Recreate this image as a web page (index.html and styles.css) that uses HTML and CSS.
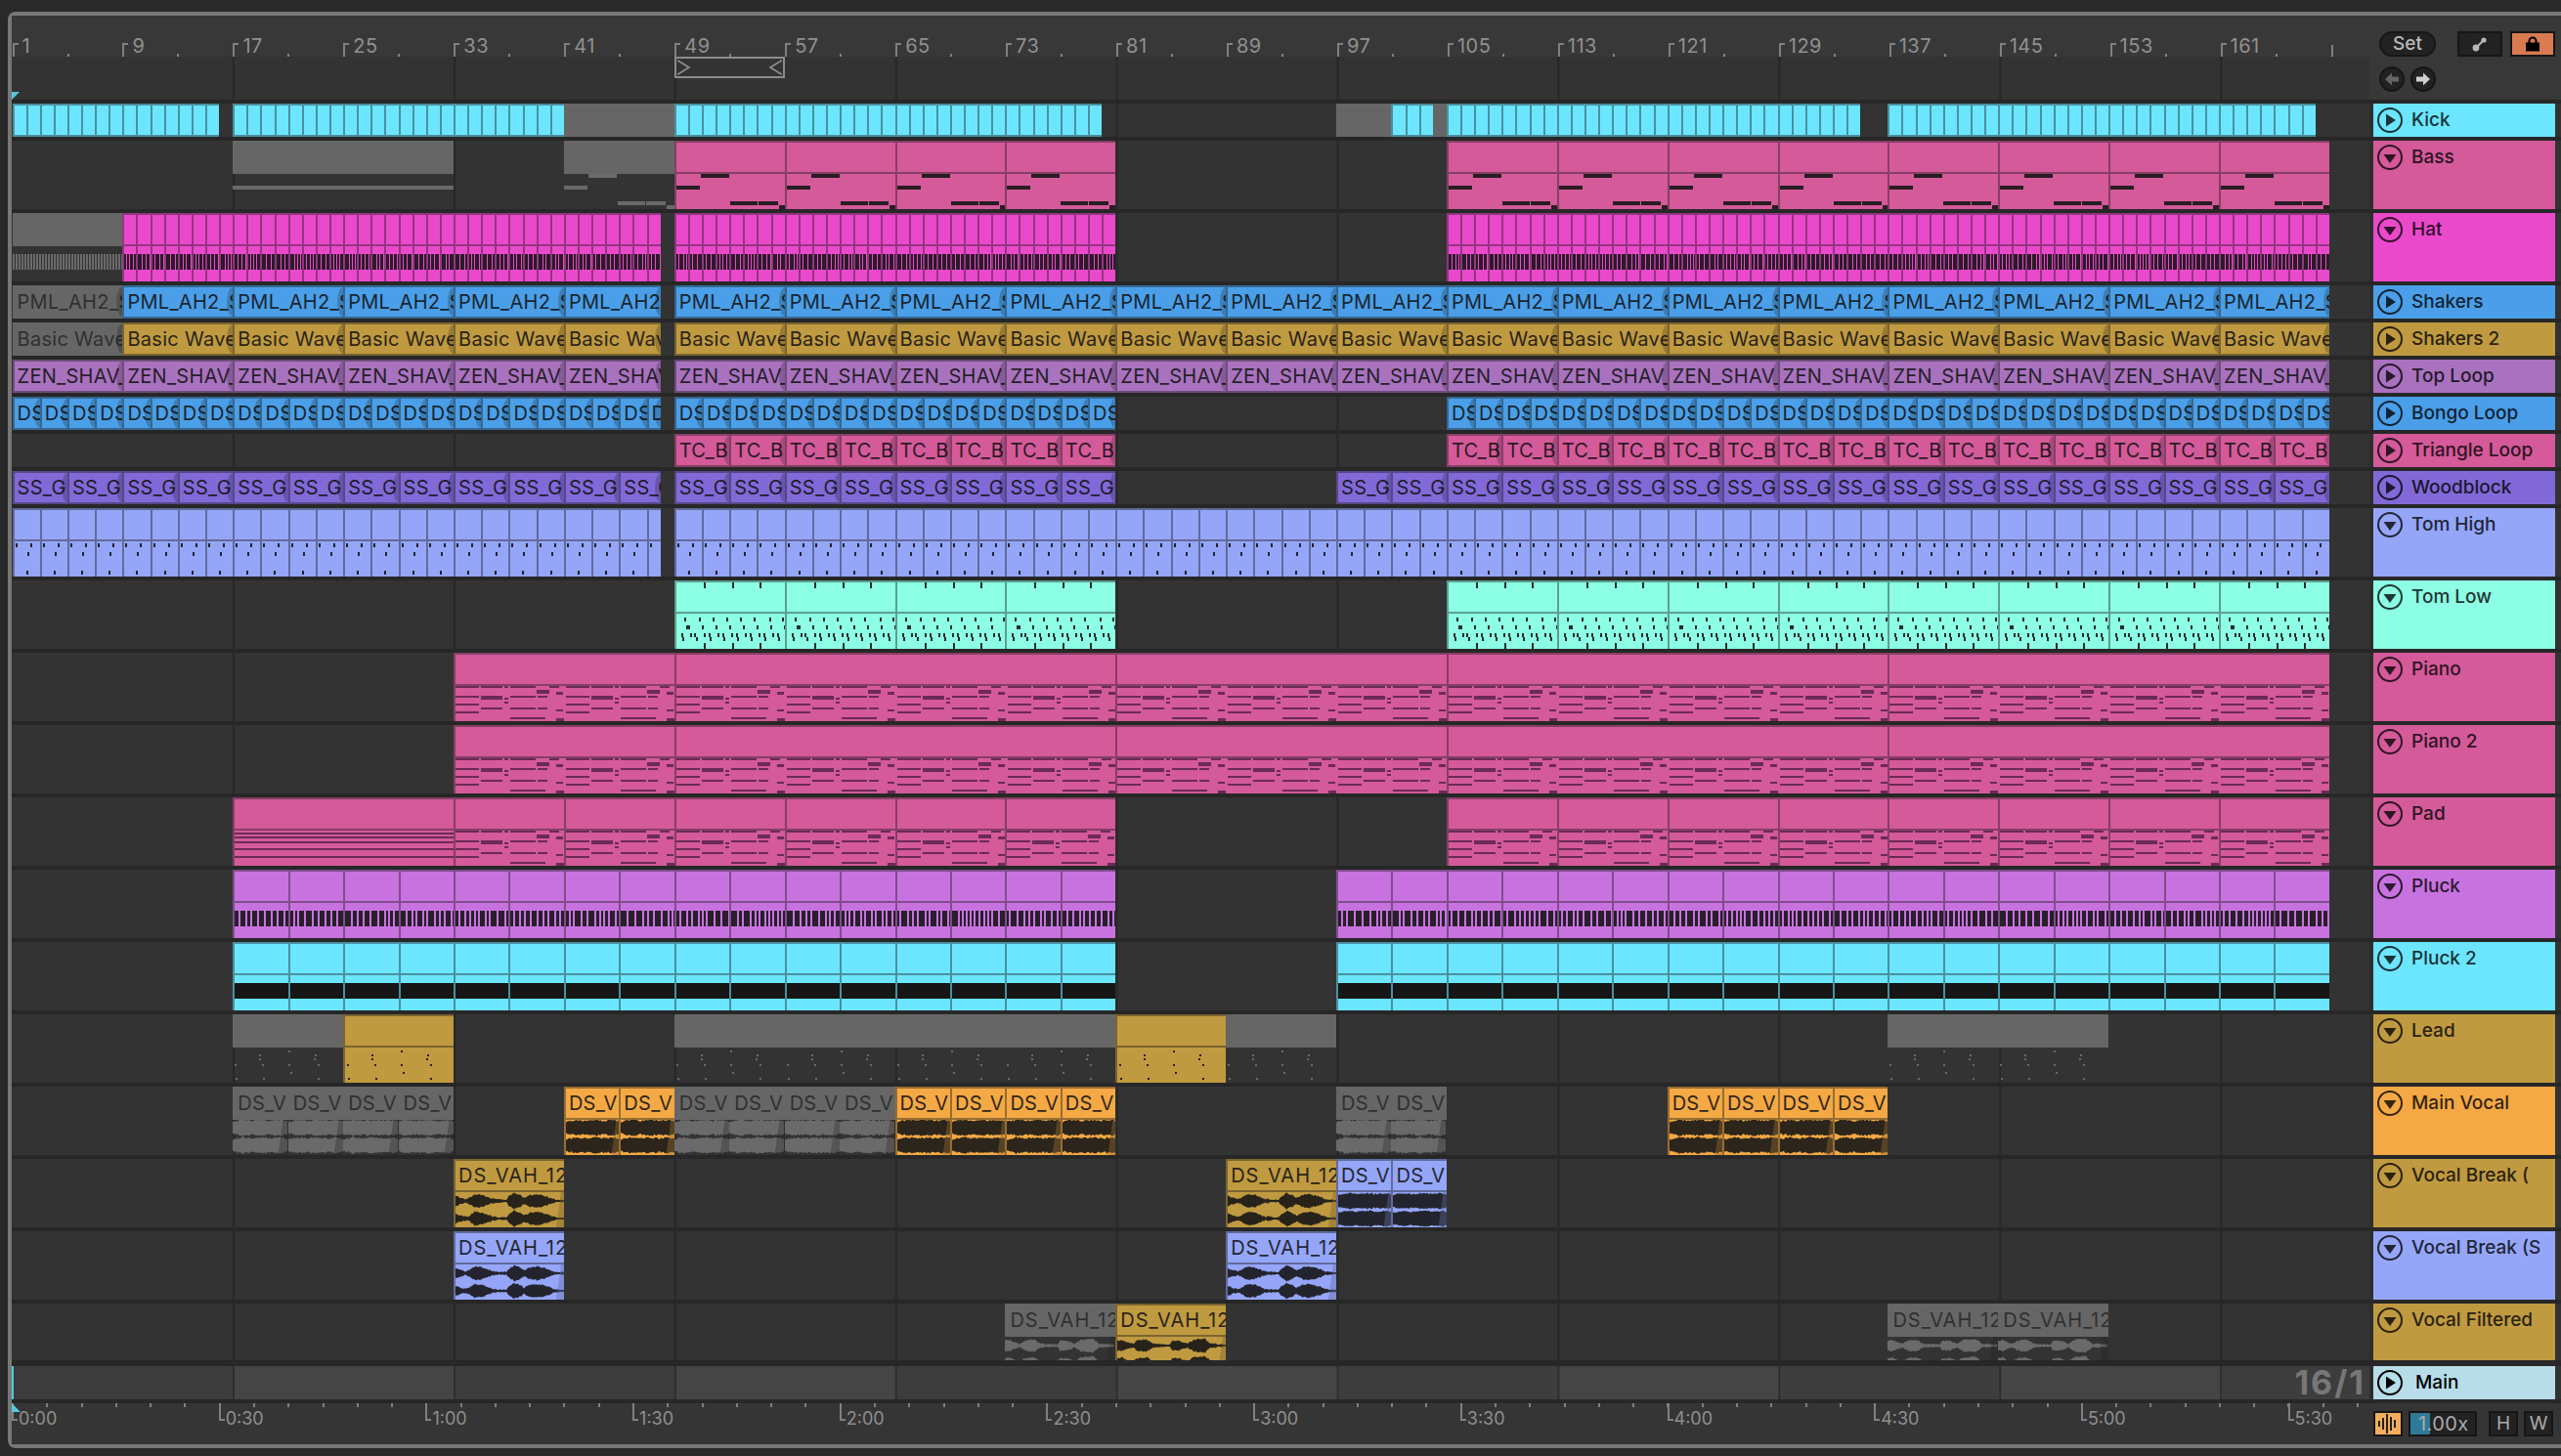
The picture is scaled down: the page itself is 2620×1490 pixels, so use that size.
FILE: index.html
```html
<!DOCTYPE html>
<html lang="en">
<head>
    <meta charset="UTF-8">
    <title>Arrangement View</title>
    <link rel="stylesheet" href="styles.css">
</head>
<body>
    <main class="frame">
        <header class="overview">
            <div class="overview-left">
                <div class="bar-ruler" id="barRuler"></div>
                <div class="loop-strip lane-grid">
                    <div class="loop-brace">
                        <svg class="loop-end" viewBox="0 0 16 20"><path d="M1 2 L14 10 L1 18"/></svg>
                        <svg class="loop-end" viewBox="0 0 16 20"><path d="M15 2 L2 10 L15 18"/></svg>
                    </div>
                    <span class="insert-mark"></span>
                </div>
            </div>
            <div class="set-controls">
                <div class="control-row">
                    <button class="set-btn">Set</button>
                    <button class="square-btn">
                        <svg width="16" height="16" viewBox="0 0 16 16"><circle cx="4" cy="12" r="3.4"/><circle cx="12" cy="4" r="2.6"/><path class="link-bar" d="M4 12 L12 4"/></svg>
                    </button>
                    <button class="square-btn lock-btn">
                        <svg width="16" height="16" viewBox="0 0 16 16"><path class="shackle" d="M4.5 7 V5 a3.5 3.5 0 0 1 7 0 V7"/><rect x="1" y="6.5" width="14" height="9"/></svg>
                    </button>
                </div>
                <div class="control-row arrows">
                    <button class="round-btn dim">
                        <svg width="16" height="16" viewBox="0 0 16 16"><path d="M1 8 L8 1.5 V5.5 H15 V10.5 H8 V14.5 Z"/></svg>
                    </button>
                    <button class="round-btn">
                        <svg width="16" height="16" viewBox="0 0 16 16"><path d="M15 8 L8 1.5 V5.5 H1 V10.5 H8 V14.5 Z"/></svg>
                    </button>
                </div>
            </div>
        </header>

        <div class="tracks" id="tracks"></div>

        <div class="track main-row">
            <div class="main-lane">
                <span class="play-line"></span>
                <span class="grid-label">16/1</span>
            </div>
            <div class="track-head main-head c-main">
                <svg class="fold" viewBox="0 0 26 26"><circle cx="13" cy="13" r="12"/><path class="fold-mark" d="M9 6.5 L19 13 L9 19.5 Z"/></svg>
                <span class="track-name">Main</span>
            </div>
        </div>

        <footer class="time-row">
            <div class="time-ruler" id="timeRuler"><span class="time-start"></span></div>
            <div class="time-controls">
                <button class="wave-btn">
                    <svg width="22" height="22" viewBox="0 0 22 22"><path d="M2 8 V14 M6 5 V17 M10 1 V21 M14 4 V18 M18 7 V15"/></svg>
                </button>
                <div class="speed">1.00x</div>
                <button class="key-btn">H</button>
                <button class="key-btn">W</button>
            </div>
        </footer>
    </main>

    <script src="script.js"></script>
</body>
</html>
```

FILE: styles.css
```css
* {
    margin: 0;
    padding: 0;
    box-sizing: border-box;
    font-family: Inter, 'Noto Sans', sans-serif;
}

body {
    width: 2620px;
    height: 1490px;
    background-color: #292929;
    overflow: hidden;
}

button {
    border: none;
    cursor: default;
}

.frame {
    display: flex;
    flex-direction: column;
    width: 2612px;
    height: 1470px;
    margin: 12px 0 0 8px;
    border: 4px solid #777;
    border-right: none;
    border-radius: 8px 0 0 8px;
    background-color: #272727;
}

/* Colours */
.c-cyan { --c: #6ce6ff; }
.c-pink { --c: #d45a9a; }
.c-hat { --c: #eb49cc; }
.c-blue { --c: #4a9fe8; }
.c-amber { --c: #c09a40; }
.c-lilac { --c: #a972bf; }
.c-violet { --c: #8269d8; }
.c-peri { --c: #95a6f9; }
.c-mint { --c: #8cffe4; }
.c-pluck { --c: #c872e0; }
.c-orange { --c: #f4a944; }
.c-main { --c: #b6dde8; }

/* Top strip */
.overview {
    display: flex;
    height: 86px;
    background-color: #383838;
}

.overview-left {
    display: flex;
    flex-direction: column;
    width: 2412px;
}

.bar-ruler {
    display: flex;
    height: 42px;
    padding-left: 0.5px;
    background-color: #383838;
}

.bar-mark {
    position: relative;
    flex: 0 0 112.96px;
    padding: 21px 0 0 10px;
    font-size: 20px;
    letter-spacing: 0.5px;
    line-height: 20px;
    color: #909090;
}

.bar-mark:before {
    content: '';
    position: absolute;
    left: 0;
    bottom: 0;
    width: 4px;
    height: 12px;
    border-left: 2px solid #808080;
    border-top: 2px solid #808080;
}

.bar-mark:after {
    content: '';
    position: absolute;
    left: 56px;
    bottom: 0;
    width: 2px;
    height: 3px;
    background-color: #808080;
}

.bar-mark.last:before {
    border-top: none;
}

.bar-mark.last:after {
    display: none;
}

.lane-grid {
    background:
        linear-gradient(#333 0 0) no-repeat 0 0 / 14px 100%,
        linear-gradient(90deg, #272727 2px, #333 2px) 226px 0 / 225.92px 100%;
}

.loop-strip {
    position: relative;
    display: grid;
    grid-template-columns: repeat(171, 14.12px);
    align-items: start;
    flex: 1;
    padding-left: 0.5px;
}

.loop-brace {
    grid-column: 49 / 57;
    display: flex;
    justify-content: space-between;
    height: 22px;
    border: 2px solid #8c8c8c;
}

.loop-end {
    width: 15px;
    height: 18px;
    fill: none;
    stroke: #8c8c8c;
    stroke-width: 2;
}

.insert-mark {
    position: absolute;
    left: 0;
    bottom: 0;
    width: 8px;
    height: 8px;
    background-color: #57c8dc;
    clip-path: polygon(0 0, 100% 0, 0 100%);
}

.set-controls {
    flex: 1;
    padding: 16px 0 0 10px;
}

.control-row {
    display: flex;
    gap: 8px;
}

.set-btn {
    width: 58px;
    height: 26px;
    margin-right: 14px;
    border: 2px solid #161616;
    border-radius: 13px;
    background-color: #222;
    color: #b8b8b8;
    font-size: 19px;
    font-weight: 500;
    line-height: 20px;
}

.square-btn {
    display: flex;
    align-items: center;
    justify-content: center;
    width: 46px;
    height: 26px;
    border: 2px solid #161616;
    background-color: #222;
    fill: #b8b8b8;
}

.link-bar {
    stroke: #b8b8b8;
    stroke-width: 2;
}

.lock-btn {
    background-color: #d97a50;
    fill: #000;
}

.shackle {
    fill: none;
    stroke: #000;
    stroke-width: 2;
}

.arrows {
    gap: 6px;
    margin-top: 10px;
}

.round-btn {
    display: flex;
    align-items: center;
    justify-content: center;
    width: 26px;
    height: 26px;
    border: 2px solid #161616;
    border-radius: 50%;
    background-color: #222;
    fill: #d0d0d0;
}

.round-btn.dim {
    fill: #666;
}

/* Track rows */
.tracks {
    display: flex;
    flex-direction: column;
    gap: 4px;
    margin-top: 4px;
}

.track {
    display: flex;
    background-color: #2e2e2e;
    padding-right: 6px;
    box-shadow: inset -6px 0 #333;
}

.h-short { height: 34px; }
.h-tall { height: 70px; }
.h-last { height: 58px; }

.lane {
    display: grid;
    grid-template-columns: repeat(171, 14.12px);
    grid-template-rows: 100%;
    flex: 0 0 2412px;
    padding-left: 0.5px;
    overflow: hidden;
}

.track-head {
    display: flex;
    align-items: flex-start;
    gap: 9px;
    flex: 0 0 186px;
    margin-left: 4px;
    padding: 4px 0 0 4px;
    background-color: var(--c);
    color: color-mix(in srgb, var(--c) 22%, #000);
}

.fold {
    flex: 0 0 26px;
    height: 26px;
    fill: none;
    stroke: currentColor;
    stroke-width: 2;
}

.fold-mark {
    fill: currentColor;
    stroke: none;
}

.track-name {
    font-size: 19px;
    font-weight: 500;
    line-height: 26px;
    white-space: nowrap;
    overflow: hidden;
}

/* Clips */
.clip {
    --edge: color-mix(in srgb, var(--c) 58%, #1a1a1a);
    --ink: color-mix(in srgb, var(--c) 10%, #161616);
    grid-row: 1;
    display: flex;
    flex-direction: column;
    min-width: 0;
    background-color: var(--c);
    border-left: 2px solid var(--edge);
    overflow: hidden;
}

.clip-head {
    position: relative;
    flex: 0 0 34px;
    padding-left: 3px;
    border-top: 2px solid var(--edge);
    border-bottom: 2px solid var(--edge);
    color: color-mix(in srgb, var(--c) 14%, #111);
    font-size: 20px;
    letter-spacing: 0.3px;
    line-height: 30px;
    white-space: nowrap;
    overflow: hidden;
}

.clip-head.long-label {
    letter-spacing: 1px;
}

.clip-head svg {
    position: absolute;
    top: 0;
    left: 0;
}

.clip-head.has-fade:after {
    content: '';
    position: absolute;
    right: 0;
    top: 0;
    bottom: 0;
    width: 6px;
    border-radius: 100% 0 0 100% / 50% 0 0 50%;
    background-color: rgba(0, 0, 0, 0.2);
}

.clip-body {
    display: block;
    flex: 1;
    min-height: 0;
}

.clip-body rect,
.clip-body path,
.clip-head rect {
    fill: var(--ink);
}

.clip-body .fade {
    fill: var(--edge);
    opacity: 0.4;
}

.clip.ink-soft {
    --ink: #6b2a58;
}

.clip.ink-black {
    --ink: #161616;
}

.clip.off {
    --c: #666;
    --edge: #666;
    --ink: #6a6a6a;
    background-color: transparent;
    border-left: none;
}

.clip.off .clip-head {
    background-color: #666;
    color: #303030;
    padding-left: 5px;
}

.clip.off .fade {
    fill: #222;
    opacity: 0.3;
}

/* Main row */
.main-row {
    flex: 0 0 34px;
    margin-top: 6px;
}

.main-lane {
    position: relative;
    flex: 0 0 2412px;
    background:
        linear-gradient(90deg, #2e2e2e 2px, transparent 2px) 226px 0 / 225.92px 100%,
        repeating-linear-gradient(90deg, #3d3d3d 0, #3d3d3d 226px, #454545 226px, #454545 452px);
}

.play-line {
    position: absolute;
    left: 0;
    top: 0;
    width: 2px;
    height: 100%;
    background-color: #57c8dc;
}

.grid-label {
    position: absolute;
    right: 4px;
    top: -3px;
    font-size: 34px;
    font-weight: 700;
    letter-spacing: 2px;
    line-height: 40px;
    color: #777;
}

.main-head {
    gap: 13px;
    color: #000;
}

/* Time ruler */
.time-row {
    display: flex;
    flex: 1;
    margin-top: 4px;
    background-color: #353535;
}

.time-ruler {
    position: relative;
    display: flex;
    flex: 0 0 2412px;
    background: repeating-linear-gradient(90deg, #808080 0, #808080 2px, transparent 2px, transparent 35.28px) 0 0 / 100% 4px no-repeat;
    overflow: hidden;
}

.time-start {
    position: absolute;
    left: 0;
    top: 0;
    width: 9px;
    height: 9px;
    background-color: #57c8dc;
    clip-path: polygon(0 0, 100% 100%, 0 100%);
    z-index: 1;
}

.time-mark {
    position: relative;
    flex: 0 0 211.7px;
    padding: 6px 0 0 7px;
    font-size: 18px;
    line-height: 20px;
    color: #8f8f8f;
}

.time-mark:before {
    content: '';
    position: absolute;
    left: 0;
    top: 0;
    width: 4px;
    height: 16px;
    border-left: 2px solid #808080;
    border-bottom: 2px solid #808080;
}

.time-controls {
    display: flex;
    gap: 6px;
    flex: 1;
    margin-left: 4px;
    padding-top: 8px;
}

.wave-btn {
    display: flex;
    align-items: center;
    justify-content: center;
    width: 30px;
    height: 26px;
    border: 2px solid #161616;
    background-color: #f4ae5b;
    fill: none;
    stroke: #222;
    stroke-width: 2;
}

.speed {
    width: 70px;
    height: 26px;
    padding-left: 8px;
    border: 2px solid #161616;
    background: linear-gradient(90deg, #2f7a96 20px, #222 20px);
    color: #aaa;
    font-size: 20px;
    letter-spacing: 0.4px;
    line-height: 22px;
}

.key-btn {
    width: 30px;
    height: 26px;
    border: 2px solid #161616;
    background-color: #222;
    color: #aaa;
    font-size: 19px;
    line-height: 20px;
}

.speed + .key-btn {
    margin-left: 6px;
}
```

FILE: script.js
```js
const BAR = 14.12;

// Small seeded generator so the note patterns stay the same on every run
let seed = 7;
function rnd() {
    seed = (seed * 16807) % 2147483647;
    return (seed & 1023) / 1023;
}

function rect(x, y, w, h) {
    return '<rect x="' + x + '" y="' + y + '" width="' + w + '" height="' + h + '"/>';
}

// Vertical strips used for the busy one-note-per-step clips
function stripes(width, y, h, minW, maxW, gap) {
    let out = '';
    let x = 0;
    while (x < width) {
        const w = minW + Math.floor(rnd() * (maxW - minW + 1));
        out += rect(x, y, w, h);
        x += w + gap;
    }
    return out;
}

// Repeat a list of [x, y, w, h] every n pixels
function repeat(width, every, notes) {
    let out = '';
    for (let x0 = 0; x0 < width - 1; x0 += every) {
        notes.forEach(function(n) {
            if (x0 + n[0] < width) out += rect(Math.round(x0 + n[0]), n[1], n[2], n[3]);
        });
    }
    return out;
}

const bassNotes = [[25, 0, 29, 4], [0, 12, 24, 4], [55, 28, 28, 4], [84, 28, 20, 4], [105, 32, 8, 4]];
const pianoNotes = [
    [0, 0, 24, 2], [26, 0, 22, 2], [50, 0, 4, 2], [56, 0, 26, 2], [84, -2, 10, 2], [96, 0, 10, 2],
    [83, 4, 13, 4],
    [0, 10, 24, 2], [26, 10, 22, 4], [50, 12, 4, 2], [56, 10, 26, 2], [84, 10, 10, 2], [103, 6, 7, 3],
    [50, 16, 4, 2],
    [0, 18, 24, 2],
    [26, 22, 22, 2], [56, 22, 26, 2], [84, 22, 10, 2], [103, 24, 7, 2],
    [0, 26, 24, 2],
    [56, 32, 36, 2], [103, 33, 8, 3]
];
const tomHighNotes = [[1, 2, 2, 4], [16, 2, 2, 4], [13, 11, 2, 4], [12, 30, 2, 4]];
const tomLowHead = [[28, 0, 2, 6], [57, 0, 2, 6], [85, 0, 2, 6]];
const tomLowNotes = [
    [8, 4, 2, 4], [23, 4, 2, 4], [37, 4, 2, 4], [51, 4, 2, 4], [65, 4, 2, 4], [79, 4, 2, 4], [95, 4, 2, 4], [108, 4, 2, 4],
    [10, 12, 4, 4], [26, 12, 2, 4], [40, 12, 2, 4], [54, 12, 2, 4], [68, 12, 2, 4], [82, 12, 2, 4], [96, 12, 2, 4], [110, 12, 2, 4],
    [5, 20, 2, 4], [14, 20, 2, 4], [18, 20, 2, 4], [28, 20, 2, 4], [33, 20, 2, 4], [42, 20, 2, 4], [47, 20, 2, 4],
    [56, 20, 2, 4], [61, 20, 2, 4], [70, 20, 2, 4], [75, 20, 2, 4], [84, 20, 2, 4], [89, 20, 2, 4], [98, 20, 2, 4], [103, 20, 2, 4],
    [6, 24, 2, 4], [20, 24, 2, 4], [34, 24, 2, 4], [48, 24, 2, 4], [62, 24, 2, 4], [76, 24, 2, 4], [90, 24, 2, 4], [104, 24, 2, 4],
    [28, 30, 2, 6], [57, 30, 2, 6], [85, 30, 2, 6]
];
const leadNotes = [
    [27, 7, 2, 2], [27, 11, 2, 2], [57, 3, 2, 2], [84, 7, 2, 2], [83, 11, 2, 2], [2, 17, 2, 2],
    [30, 17, 2, 2], [57, 17, 2, 2], [87, 17, 2, 2], [59, 25, 2, 2], [3, 31, 2, 2], [31, 31, 2, 2], [87, 31, 2, 2]
];

// Amplitude over x for the audio clips, as [x, amplitude] points
const envPhrase = [[0, 5], [6, 3], [10, 2], [14, 3], [20, 7], [28, 6], [38, 2], [52, 1], [54, 4], [60, 8], [66, 6], [70, 3], [76, 6], [84, 7], [92, 5], [100, 2], [104, 1], [114, 1]];
const envFiltered = [[0, 5], [5, 6], [10, 3], [16, 2], [20, 5], [30, 6], [36, 2], [54, 1], [56, 5], [64, 5], [72, 2], [78, 6], [90, 7], [96, 2], [114, 1]];
const envFull = [[0, 6], [10, 8], [20, 7], [30, 8], [40, 7], [50, 8], [57, 6]];

function envAt(env, x) {
    for (let i = 1; i < env.length; i++) {
        if (x <= env[i][0]) {
            const t = (x - env[i - 1][0]) / (env[i][0] - env[i - 1][0]);
            return env[i - 1][1] + (env[i][1] - env[i - 1][1]) * t;
        }
    }
    return env[env.length - 1][1];
}

function wave(width, env, centers, jitter) {
    let out = '';
    centers.forEach(function(cy) {
        let top = '';
        let bottom = '';
        for (let x = 0; x <= width; x += 1) {
            const a = Math.max(envAt(env, x) + rnd() * jitter - jitter / 2, 1);
            top += (x ? 'L' : 'M') + x + ' ' + (cy - a).toFixed(1);
            bottom = 'L' + x + ' ' + (cy + a).toFixed(1) + bottom;
        }
        out += '<path d="' + top + bottom + 'Z"/>';
    });
    out += '<polygon class="fade" points="' + width + ',0 ' + (width - 5) + ',0 ' + (width - 10) + ',36 ' + width + ',36"/>';
    return out;
}

// Body drawings, one per kind of clip
const draw = {
    bass: function(w) {
        if (w > 200) return rect(0, 12, w, 4);
        return repeat(w, 112.96, bassNotes);
    },
    hat: function(w, off) { return off ? stripes(w, 8, 16, 2, 2, 1) : stripes(w, 8, 16, 2, 4, 1); },
    tomHigh: function(w) { return repeat(w, 28.24, tomHighNotes); },
    tomLow: function(w) { return repeat(w, 112.96, tomLowNotes); },
    piano: function(w) { return repeat(w, 112.96, pianoNotes); },
    pad: function(w) {
        if (w > 200) {
            return rect(0, 2, w, 2) + rect(0, 6, w, 2) + rect(0, 11, w, 2) + rect(0, 18, w, 2) + rect(0, 26, w, 2);
        }
        return repeat(w, 112.96, pianoNotes);
    },
    pluck: function(w) { return stripes(w, 8, 16, 2, 6, 2); },
    pluck2: function(w) { return rect(0, 8, w, 16); },
    lead: function(w) { return repeat(w, 112.96, leadNotes); },
    vocal: function(w) { return wave(w, envFull, [8, 26], 2); },
    phrase: function(w) { return wave(w, w < 80 ? envFull : envPhrase, [9, 27], 1.6); },
    filtered: function(w) { return wave(w, envFiltered, [9, 27], 1.6); }
};

const DS = 'DS_VAH_12';

// clips: [from bar, to bar, step in bars, flag], flag is 'off' for a deactivated clip or a colour override
const trackList = [
    { name: 'Kick', color: 'cyan', play: true, clips: [[1, 16, 1], [17, 41, 1], [41, 49, 8, 'off'], [49, 80, 1], [97, 101, 4, 'off'], [101, 104, 1], [104, 105, 1, 'off'], [105, 135, 1], [137, 168, 1]] },
    { name: 'Bass', color: 'pink', body: 'bass', clips: [[17, 33, 16, 'off'], [41, 49, 8, 'off'], [49, 81, 8], [105, 169, 8]] },
    { name: 'Hat', color: 'hat', body: 'hat', clips: [[1, 9, 8, 'off'], [9, 48, 1], [49, 81, 1], [105, 169, 1]] },
    { name: 'Shakers', color: 'blue', play: true, label: 'PML_AH2_S', clips: [[1, 9, 8, 'off'], [9, 48, 8], [49, 169, 8]] },
    { name: 'Shakers 2', color: 'amber', play: true, label: 'Basic Wave', clips: [[1, 9, 8, 'off'], [9, 48, 8], [49, 169, 8]] },
    { name: 'Top Loop', color: 'lilac', play: true, label: 'ZEN_SHAV_', clips: [[1, 48, 8], [49, 169, 8]] },
    { name: 'Bongo Loop', color: 'blue', play: true, label: 'DS', clips: [[1, 48, 2], [49, 81, 2], [105, 169, 2]] },
    { name: 'Triangle Loop', color: 'pink', play: true, label: 'TC_B', clips: [[49, 81, 4], [105, 169, 4]] },
    { name: 'Woodblock', color: 'violet', play: true, label: 'SS_G', clips: [[1, 48, 4], [49, 81, 4], [97, 169, 4]] },
    { name: 'Tom High', color: 'peri', body: 'tomHigh', clips: [[1, 48, 2], [49, 169, 2]] },
    { name: 'Tom Low', color: 'mint', body: 'tomLow', head: tomLowHead, clips: [[49, 81, 8], [105, 169, 8]] },
    { name: 'Piano', color: 'pink', body: 'piano', ink: 'ink-soft', clips: [[33, 49, 16], [49, 81, 32], [81, 105, 24], [105, 137, 32], [137, 169, 32]] },
    { name: 'Piano 2', color: 'pink', body: 'piano', ink: 'ink-soft', clips: [[33, 49, 16], [49, 81, 32], [81, 105, 24], [105, 137, 32], [137, 169, 32]] },
    { name: 'Pad', color: 'pink', body: 'pad', ink: 'ink-soft', clips: [[17, 33, 16], [33, 81, 8], [105, 169, 8]] },
    { name: 'Pluck', color: 'pluck', body: 'pluck', clips: [[17, 81, 4], [97, 169, 4]] },
    { name: 'Pluck 2', color: 'cyan', body: 'pluck2', ink: 'ink-black', clips: [[17, 81, 4], [97, 169, 4]] },
    { name: 'Lead', color: 'amber', body: 'lead', clips: [[17, 25, 8, 'off'], [25, 33, 8], [49, 81, 8, 'off'], [81, 89, 8], [89, 97, 8, 'off'], [137, 153, 8, 'off']] },
    { name: 'Main Vocal', color: 'orange', body: 'vocal', label: 'DS_V', clips: [[17, 33, 4, 'off'], [41, 49, 4], [49, 65, 4, 'off'], [65, 81, 4], [97, 105, 4, 'off'], [121, 137, 4]] },
    { name: 'Vocal Break (', color: 'amber', body: 'phrase', label: DS, clips: [[33, 41, 8], [89, 97, 8], [97, 105, 4, 'peri']] },
    { name: 'Vocal Break (S', color: 'peri', body: 'phrase', label: DS, clips: [[33, 41, 8], [89, 97, 8]] },
    { name: 'Vocal Filtered', color: 'amber', body: 'filtered', label: DS, size: 'h-last', clips: [[73, 81, 8, 'off'], [81, 89, 8], [137, 153, 8, 'off']] }
];

function foldIcon(play) {
    const mark = play ? 'M9 6.5 L19 13 L9 19.5 Z' : 'M6.5 10 L19.5 10 L13 19 Z';
    return '<svg class="fold" viewBox="0 0 26 26"><circle cx="13" cy="13" r="12"/><path class="fold-mark" d="' + mark + '"/></svg>';
}

function clipHtml(track, from, to, flag) {
    const off = flag === 'off';
    const colour = off || !flag ? track.color : flag;
    const w = (to - from) * BAR;
    let cls = 'clip c-' + colour;
    if (off) cls += ' off';
    if (track.ink) cls += ' ' + track.ink;

    let head = '';
    if (track.label) head += w < 80 ? track.label.slice(0, 4) : track.label;
    if (track.head && !off) {
        head += '<svg width="' + w + '" height="30">' + repeat(w, 112.96, track.head) + '</svg>';
    }

    let body = '';
    if (track.body) {
        body = '<svg class="clip-body" width="' + w + '" height="36">' + draw[track.body](w, off) + '</svg>';
    }

    let headCls = 'clip-head';
    if (track.label && !track.body) headCls += ' has-fade';
    if (track.label === DS && w > 80) headCls += ' long-label';

    return '<div class="' + cls + '" style="grid-column:' + from + ' / ' + to + '">' +
        '<div class="' + headCls + '">' + head + '</div>' + body + '</div>';
}

function buildTracks() {
    const holder = document.getElementById('tracks');
    let html = '';
    trackList.forEach(function(track) {
        const size = track.size || (track.body ? 'h-tall' : 'h-short');
        let clips = '';
        track.clips.forEach(function(c) {
            for (let b = c[0]; b < c[1]; b += c[2]) {
                clips += clipHtml(track, b, Math.min(b + c[2], c[1]), c[3]);
            }
        });
        html += '<div class="track ' + size + '">' +
            '<div class="lane lane-grid">' + clips + '</div>' +
            '<div class="track-head c-' + track.color + '">' + foldIcon(track.play) +
            '<span class="track-name">' + track.name + '</span></div></div>';
    });
    holder.innerHTML = html;
}

function buildRulers() {
    const bars = document.getElementById('barRuler');
    for (let b = 1; b <= 169; b += 8) {
        const mark = document.createElement('div');
        mark.className = b === 169 ? 'bar-mark last' : 'bar-mark';
        mark.textContent = b === 169 ? '' : b;
        bars.appendChild(mark);
    }

    const times = document.getElementById('timeRuler');
    for (let s = 0; s <= 330; s += 30) {
        const mark = document.createElement('div');
        const sec = s % 60;
        mark.className = 'time-mark';
        mark.textContent = Math.floor(s / 60) + ':' + (sec < 10 ? '0' + sec : sec);
        times.appendChild(mark);
    }
}

buildTracks();
buildRulers();
```
